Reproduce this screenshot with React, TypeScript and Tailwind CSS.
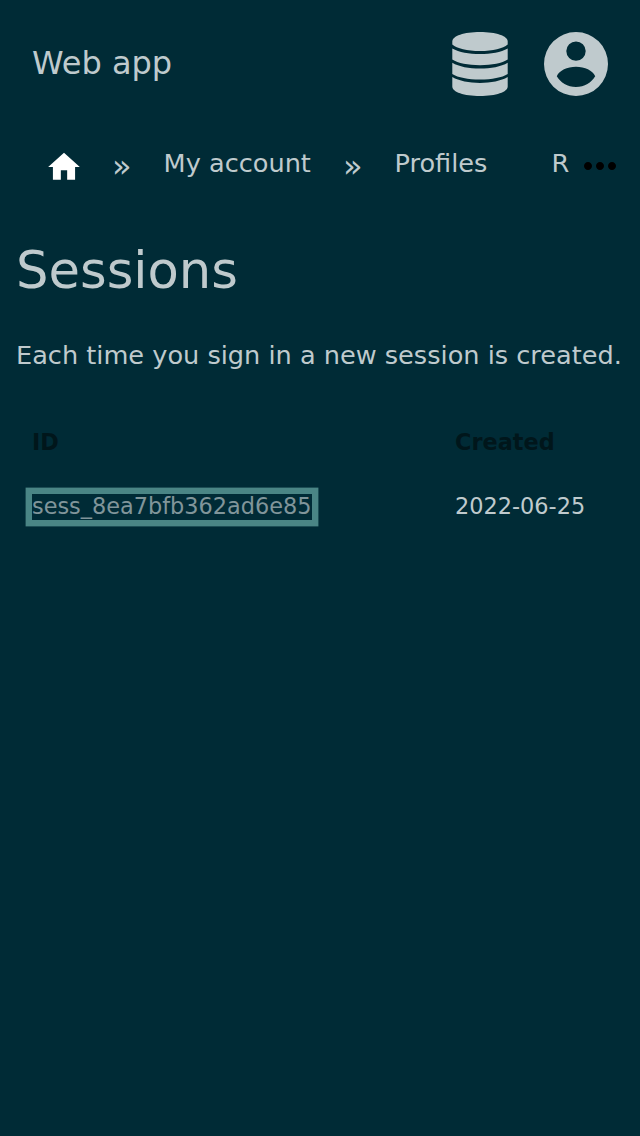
import React from 'react';
import { MdHome, MdMoreHoriz } from 'react-icons/md';

function Database() {
  return (
    <svg viewBox="0 0 56 64" className="h-16 w-14" fill="currentColor">
      <path d="M0.3 9.5C0.3 4 12 0 28 0S55.7 4 55.7 9.5V12.5C51 16.5 41 19 28 19S5 16.5 0.3 12.5Z" />
      <path d="M0.3 16.5C7 20.3 17 22 28 22S49 20.3 55.7 16.5V27.5C50 31.2 40 33.2 28 33.2S6 31.2 0.3 27.5Z" />
      <path d="M0.3 30.7C7 34.7 17 36.5 28 36.5S49 34.7 55.7 30.7V42C50 45.6 40 47.5 28 47.5S6 45.6 0.3 42Z" />
      <path d="M0.3 45C7 49 17 50.9 28 50.9S49 49 55.7 45V54.5C55.7 60 44 64 28 64S0.3 60 0.3 54.5Z" />
    </svg>
  );
}

function Account() {
  return (
    <svg viewBox="0 0 64 64" className="ml-9 size-16" fill="currentColor">
      <path
        fillRule="evenodd"
        d="M32 0a32 32 0 1 0 0 64a32 32 0 0 0 0-64ZM32 9.4a9.7 9.7 0 1 1 0 19.4a9.7 9.7 0 0 1 0-19.4ZM12.8 44.2C15.5 38.5 23 34.8 32 34.8S48.5 38.5 51.2 44.2C47.5 50.5 40.5 55 32 55S16.5 50.5 12.8 44.2Z"
      />
    </svg>
  );
}

export default function App() {
  return (
    <div className="min-h-[1136px] w-[640px] overflow-hidden bg-[#002b36] font-['DejaVu_Sans',sans-serif] text-[#bfcacd]">
      <header className="flex h-32 items-center px-8">
        <span className="grow pb-0.5 text-[32px]">Web app</span>
        <Database />
        <Account />
      </header>
      <nav className="flex h-[72px] items-center pl-[45px] text-[25.6px]">
        <MdHome className="mr-px mt-1.5 size-[38px] text-white" />
        <span className="ml-7 pt-[3px] text-[32px] leading-10">»</span>
        <span className="ml-8 pb-0.5">My account</span>
        <span className="ml-8 pt-[3px] text-[32px] leading-10">»</span>
        <span className="ml-8 pb-0.5">Profiles</span>
        <span className="ml-16 pb-0.5">R</span>
        <MdMoreHoriz className="ml-[7px] mt-1 size-12 text-black" />
      </nav>
      <main className="px-4">
        <h1 className="pt-[35px] text-[51.2px] leading-[70px]">Sessions</h1>
        <p className="mt-8 whitespace-nowrap text-[25.6px] leading-[36px]">Each time you sign in a new session is created.</p>
        <table className="mt-[38px] w-full table-fixed border-collapse text-left text-[22.4px]">
          <thead>
            <tr className="h-16 text-[#00161b]">
              <th className="w-[423px] pl-4 font-bold">ID</th>
              <th className="pl-4 font-bold">Created</th>
            </tr>
          </thead>
          <tbody>
            <tr className="h-16">
              <td className="pl-4">
                <a className="block h-[26px] w-[280px] leading-[24px] text-[#80959a] shadow-[0_0_0_6.4px_#4a8585]">sess_8ea7bfb362ad6e85</a>
              </td>
              <td className="pl-4">2022-06-25</td>
            </tr>
          </tbody>
        </table>
      </main>
    </div>
  );
}
